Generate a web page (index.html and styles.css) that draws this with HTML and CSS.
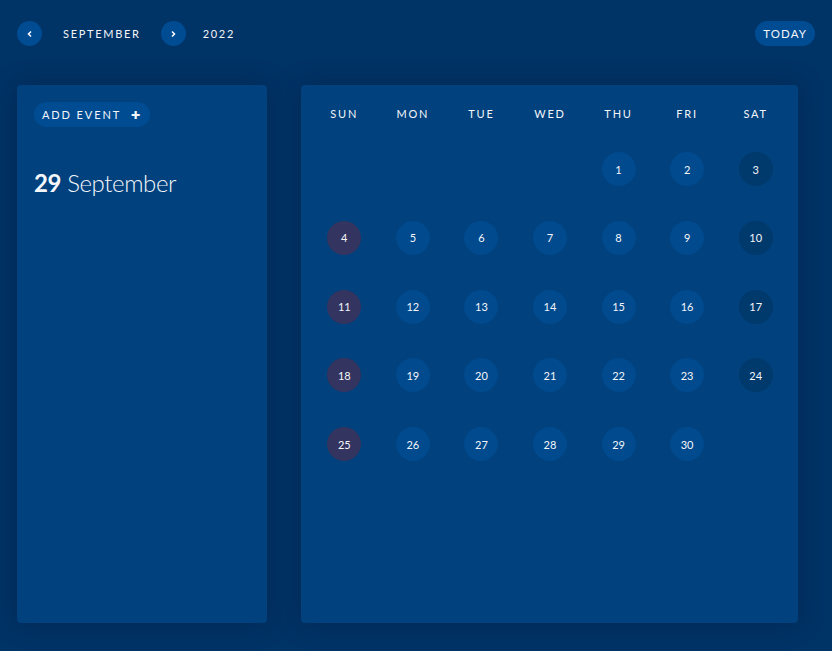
FILE: index.html
```html
<!DOCTYPE html>
<html lang="en">
<head>
    <meta charset="UTF-8">
    <meta name="viewport" content="width=device-width, initial-scale=1.0">
    <link rel="stylesheet" href="styles.css">
    <title>Calendar</title>
</head>
<body>
    <header class="top-bar">
        <div class="month-nav">
            <button type="button" class="nav-btn" aria-label="Previous month">
                <svg width="8" height="8" viewBox="0 0 8 8"><path d="M5 1.5 L2.5 4 L5 6.5" fill="none" stroke="#fff" stroke-width="1.5"/></svg>
            </button>
            <span class="month-name">SEPTEMBER</span>
            <button type="button" class="nav-btn" aria-label="Next month">
                <svg width="8" height="8" viewBox="0 0 8 8"><path d="M3 1.5 L5.5 4 L3 6.5" fill="none" stroke="#fff" stroke-width="1.5"/></svg>
            </button>
            <span class="year">2022</span>
        </div>
        <button type="button" class="today-btn">TODAY</button>
    </header>

    <main class="layout">
        <section class="panel events">
            <button type="button" class="add-event">ADD EVENT <span class="plus">&#10010;</span></button>
            <h2 class="selected-date"><strong>29</strong> September</h2>
        </section>

        <section class="panel calendar">
            <div class="week-head">
                <span>SUN</span><span>MON</span><span>TUE</span><span>WED</span><span>THU</span><span>FRI</span><span>SAT</span>
            </div>
            <div class="days" id="days"></div>
        </section>
    </main>

    <script>
        const daysEl = document.getElementById('days');
        const firstDay = 4; // thursday
        const total = 30;
        for (let i = 0; i < firstDay; i++) {
            const blank = document.createElement('div');
            blank.className = 'day-cell';
            daysEl.appendChild(blank);
        }
        for (let d = 1; d <= total; d++) {
            const cell = document.createElement('div');
            cell.className = 'day-cell';
            const dot = document.createElement('span');
            const col = (firstDay + d - 1) % 7;
            dot.className = 'day';
            if (col === 0) dot.classList.add('sun');
            if (col === 6) dot.classList.add('sat');
            dot.textContent = d;
            cell.appendChild(dot);
            daysEl.appendChild(cell);
        }
    </script>
</body>
</html>
```

FILE: styles.css
```css
* {
    margin: 0;
    padding: 0;
    box-sizing: border-box;
    font-family: Lato, "Open Sans", sans-serif;
}
body {
    background: #003366;
    color: #f4f6fa;
    padding: 17px;
    height: 651px;
    overflow: hidden;
}
button {
    border: none;
    color: #f4f6fa;
    cursor: pointer;
    background: #004c93;
}
.top-bar {
    display: flex;
    align-items: center;
    justify-content: space-between;
    height: 33px;
}
.month-nav {
    display: flex;
    align-items: center;
}
.nav-btn {
    width: 25px;
    height: 25px;
    border-radius: 50%;
    display: flex;
    align-items: center;
    justify-content: center;
}
.month-name,
.year {
    font-size: 11px;
    letter-spacing: 1.7px;
}
.month-name {
    margin: 0 20px 0 21px;
}
.year {
    margin-left: 17px;
}
.today-btn {
    height: 25px;
    padding: 0 8px;
    border-radius: 13px;
    font-size: 11.5px;
    letter-spacing: 1.1px;
}
.layout {
    display: grid;
    grid-template-columns: 250px 497px;
    column-gap: 34px;
    margin-top: 35px;
}
.panel {
    background: #00417e;
    border-radius: 4px;
    height: 538px;
    box-shadow: 0 0 24px rgba(0, 20, 50, 0.35);
}
.events {
    padding: 17px;
}
.add-event {
    height: 25px;
    padding: 0 10px 0 8px;
    border-radius: 13px;
    font-size: 11px;
    letter-spacing: 1.9px;
    display: inline-flex;
    align-items: center;
}
.plus {
    font-size: 11px;
    margin-left: 10px;
    letter-spacing: 0;
}
.selected-date {
    margin-top: 41px;
    font-size: 24px;
    font-weight: 300;
    letter-spacing: -0.4px;
}
.selected-date strong {
    font-weight: 700;
}
.calendar {
    padding: 20px 8px 0 9px;
}
.week-head,
.days {
    display: grid;
    grid-template-columns: repeat(7, 1fr);
}
.week-head span {
    text-align: center;
    font-size: 11px;
    letter-spacing: 1.8px;
    line-height: 18px;
}
.days {
    margin-top: 29px;
    grid-auto-rows: 68.8px;
}
.day-cell {
    display: flex;
    justify-content: center;
}
.day {
    width: 34px;
    height: 34px;
    border-radius: 50%;
    background: #004a8d;
    display: flex;
    align-items: center;
    justify-content: center;
    font-size: 11px;
}
.day.sun {
    background: #33345f;
}
.day.sat {
    background: #00396c;
}
```
